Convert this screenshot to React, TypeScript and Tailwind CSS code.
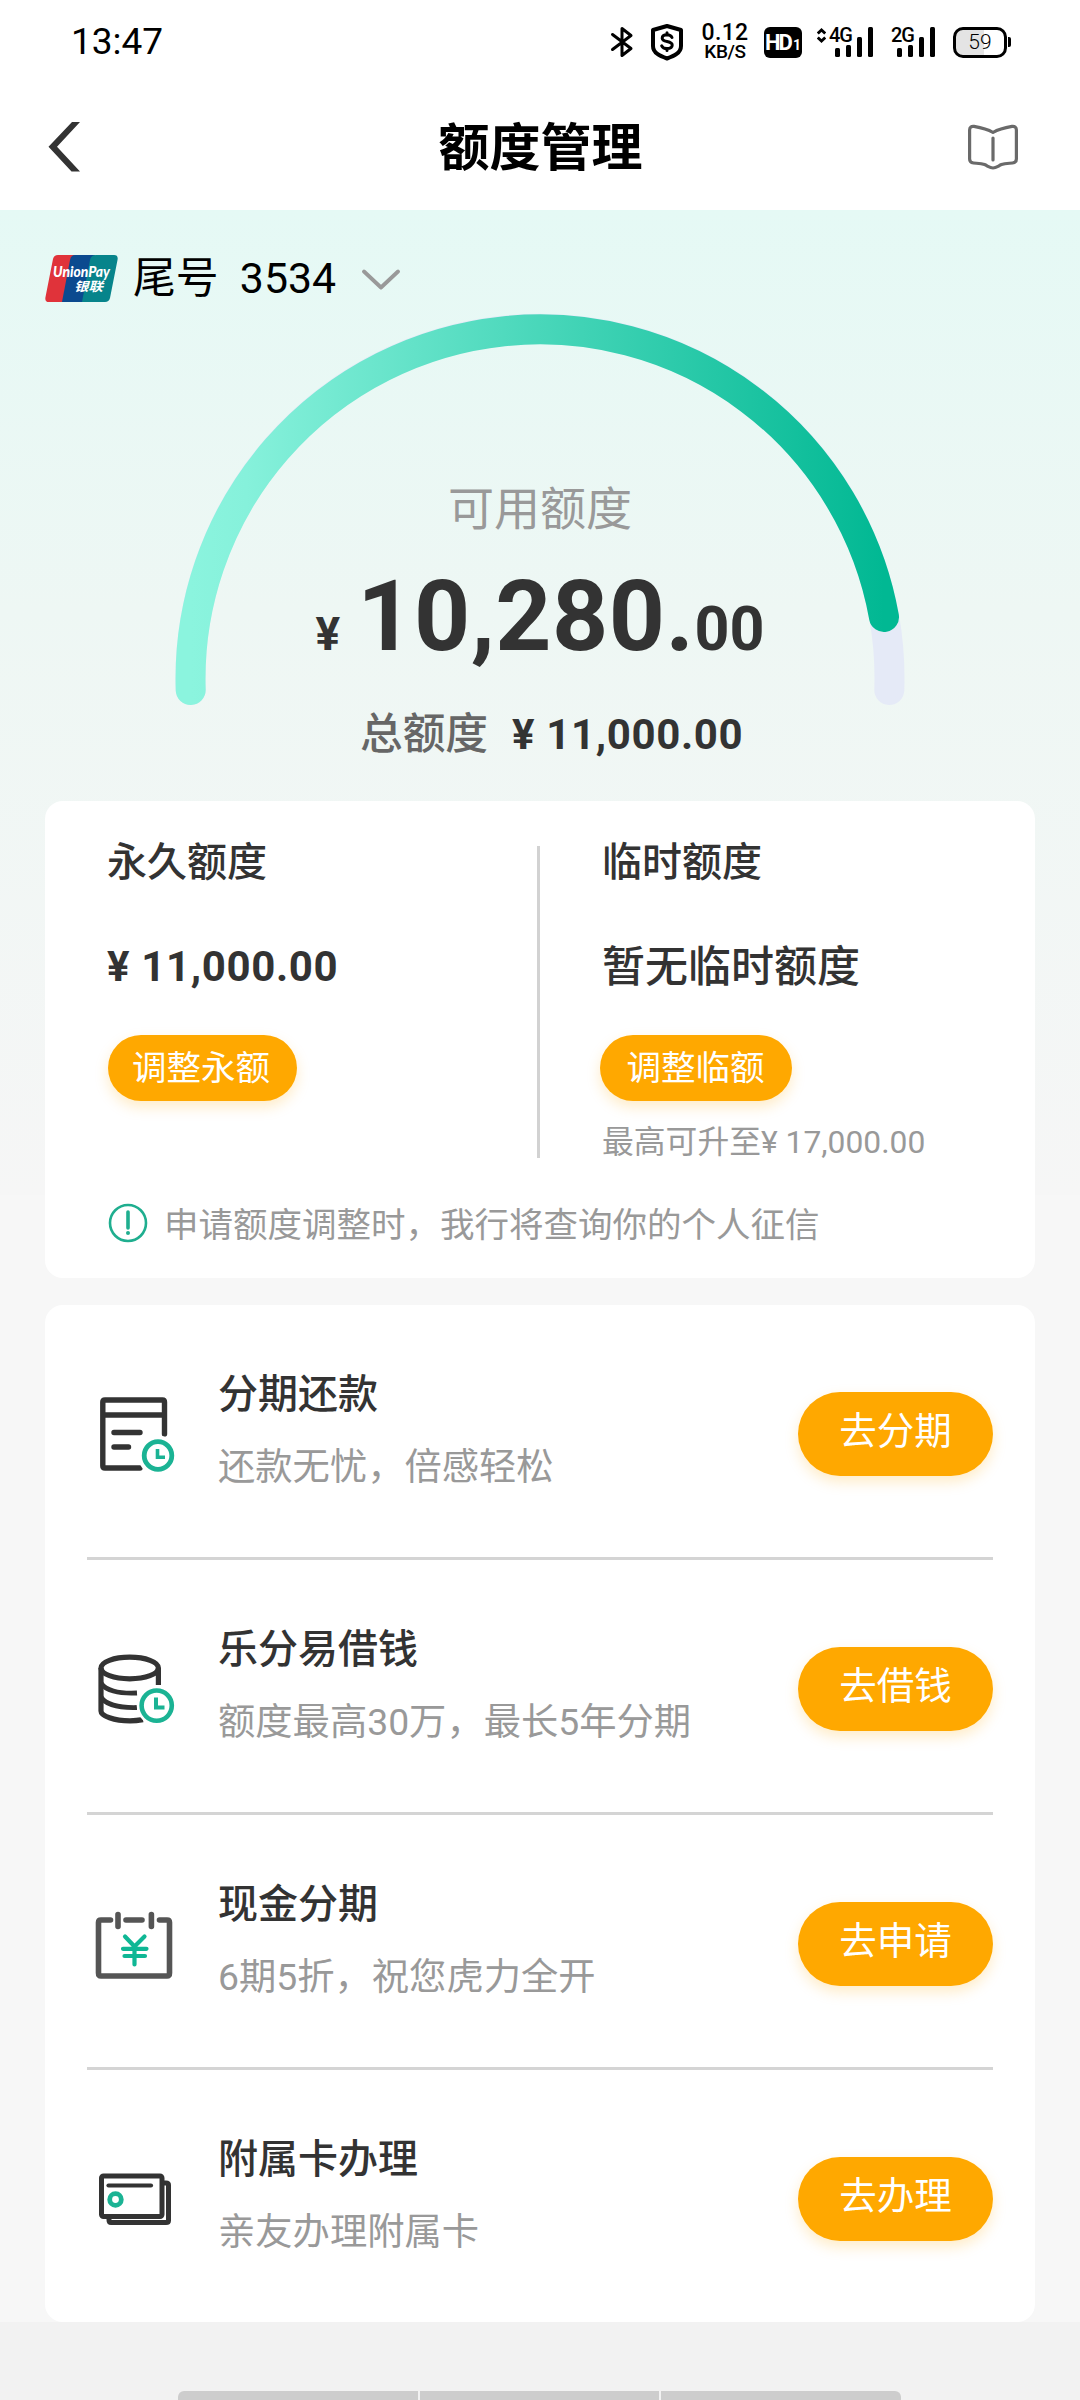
import React from "react";

const CJK = "font-['Roboto','Noto_Sans_CJK_SC',sans-serif]";

function SignalBars() {
  return (
    <svg className="absolute bottom-0 right-0 h-[30px] w-[38px]" viewBox="0 0 38 30" fill="#000">
      <rect x="0" y="21" width="5" height="9" rx="1.5" />
      <rect x="11" y="18" width="5" height="12" rx="1.5" />
      <rect x="22" y="10" width="5" height="20" rx="1.5" />
      <rect x="33" y="0" width="5" height="30" rx="1.5" />
    </svg>
  );
}

function StatusBar() {
  return (
    <div className="flex h-[84px] items-center pl-[71px] pr-[69px]">
      <div className="text-[37px] leading-[42px] text-black">13:47</div>
      <div className="ml-auto flex items-center">
        <svg className="h-[32px] w-[24px]" viewBox="0 0 24 32" fill="none" stroke="#000" strokeWidth="3" strokeLinejoin="round" strokeLinecap="round">
          <path d="M2.5 8.5 L21 22.5 L12 29.5 V2.5 L21 9.5 L2.5 23.5" />
        </svg>
        <svg className="ml-[16px] h-[38px] w-[34px]" viewBox="0 0 34 38" fill="none" stroke="#000" strokeLinejoin="round" strokeLinecap="round">
          <path d="M17 3 L31 7 V23 C31 30 24 33 17 35.5 C10 33 3 30 3 23 V7 Z" strokeWidth="4" />
          <path d="M22 14.5 C21 12.3 19 11.8 17 11.8 C14 11.8 12.2 13 12.2 15.2 C12.2 19.8 22.2 17.2 22.2 22 C22.2 24.4 20 25.6 17 25.6 C14.6 25.6 12.6 24.8 11.7 22.8 M17 9.8 V12 M17 25.6 V27.6" strokeWidth="3" />
        </svg>
        <div className="ml-[18px] flex w-[46px] flex-col items-center font-medium text-black">
          <span className="text-[23px] leading-[20px] tracking-[0.3px]">0.12</span>
          <span className="text-[19px] leading-[18px] tracking-[-0.4px]">KB/S</span>
        </div>
        <div className="ml-[16px] flex h-[31px] w-[38px] items-center justify-center rounded-[6px] bg-black pt-px text-white">
          <span className="text-[22px] font-bold leading-none tracking-[-2px]">HD</span>
          <span className="pl-[2px] pt-[5px] text-[14px] font-bold leading-none">1</span>
        </div>
        <div className="relative ml-[15px] h-[30px] w-[56px]">
          <svg className="absolute left-0 top-[1px] h-[15px] w-[9px]" viewBox="0 0 9 15" fill="none" stroke="#000" strokeWidth="2.8">
            <path d="M0.800 5.5 L4.5 2 L8.200 5.5 M0.800 9.5 L4.5 13 L8.200 9.5" />
          </svg>
          <span className="absolute left-[12px] top-[-2px] text-[20px] font-medium leading-[20px] tracking-[-1px]">4G</span>
          <SignalBars />
        </div>
        <div className="relative ml-[18px] h-[30px] w-[44px]">
          <span className="absolute left-0 top-[-2px] text-[20px] font-medium leading-[20px] tracking-[-1px]">2G</span>
          <SignalBars />
        </div>
        <div className="ml-[18px] flex items-center">
          <div className="flex h-[31px] w-[54px] items-center justify-center rounded-[10px] border-[3px] border-black bg-[linear-gradient(to_right,#e4e4e4_58%,#fff_58%)] text-[21px] font-light leading-none">59</div>
          <div className="ml-px h-[10px] w-[3px] rounded-r-[2px] bg-black" />
        </div>
      </div>
    </div>
  );
}

function TitleBar() {
  return (
    <div className="flex h-[126px] items-center justify-between pb-[1px] pl-[48px] pr-[61px]">
      <svg className="h-[50px] w-[34px]" viewBox="0 0 34 50" fill="#333">
        <path d="M24 0 H32 L9 24.7 L32 49.5 H23.5 L0.5 24.7 Z" />
      </svg>
      <h1 className="pl-[32px] pt-[4px] text-[51px] font-bold leading-[60px] text-black">额度管理</h1>
      <svg className="h-[46px] w-[52px]" viewBox="0 0 52 46" fill="none" stroke="#6a6a6a" strokeWidth="3.2" strokeLinejoin="round" strokeLinecap="round">
        <path d="M26 8.5 C21 5.5 14 3.6 7 2.4 C4.5 2 2.6 3.2 2.6 6 V35 C2.6 37.4 4 38.7 6.5 39 C10 39.4 14 39.3 17.5 40.6 C20.5 41.8 23 44 26 44 C29 44 31.5 41.8 34.5 40.6 C38 39.3 42 39.4 45.5 39 C48 38.7 49.4 37.4 49.4 35 V6 C49.4 3.2 47.5 2 45 2.4 C38 3.6 31 5.5 26 8.5 Z M26 14 V36" />
      </svg>
    </div>
  );
}

function UnionPayLogo() {
  return (
    <svg className="h-[47px] w-[73px]" viewBox="0 0 73 47">
      <path d="M13 0 H30 L20 47 H4 Q-0.5 47 0.5 42 L8 4 Q9 0 13 0 Z" fill="#e0333a" />
      <path d="M30 0 H50 L40 47 H17 L25 5 Q26 0 30 0 Z" fill="#0b4a8f" />
      <path d="M51 0 H69 Q73.5 0 72.5 5 L65 43 Q64 47 60 47 H37 L45 5 Q46 0 51 0 Z" fill="#07848b" />
      <text x="8" y="22" fontSize="15" fontWeight="900" fontStyle="italic" fill="#fff" textLength="57" lengthAdjust="spacingAndGlyphs" fontFamily="Lato, sans-serif">UnionPay</text>
      <text x="29" y="35.5" fontSize="12.5" fontWeight="700" fontStyle="italic" fill="#fff" textLength="29" lengthAdjust="spacingAndGlyphs" fontFamily="Noto Sans CJK SC, sans-serif">银联</text>
    </svg>
  );
}

function Gauge() {
  return (
    <div className="relative mt-[8px] h-[394px] w-[730px] self-center">
      <svg className="absolute inset-0 h-[394px] w-[730px]" viewBox="175 312 730 394" fill="none" strokeWidth="30" strokeLinecap="round">
        <defs>
          <linearGradient id="gauge" gradientUnits="userSpaceOnUse" x1="191" y1="0" x2="884" y2="0">
            <stop offset="0" stopColor="#8bf4de" />
            <stop offset="0.08" stopColor="#86f1db" />
            <stop offset="1" stopColor="#01b893" />
          </linearGradient>
        </defs>
        <path d="M190.7 690 A349.5 349.5 0 1 1 889.3 690" stroke="#e5eaf7" />
        <path d="M190.7 690 A349.5 349.5 0 0 1 884 617" stroke="url(#gauge)" />
      </svg>
      <div className="relative flex flex-col items-center pt-[164px]">
        <div className="text-[46px] leading-[66px] text-[#999]">可用额度</div>
        <div className="mt-[17px] flex items-baseline whitespace-pre font-bold leading-[116px] text-[#333]">
          <span className="text-[46px]">¥</span>
          <span className="ml-[17px] text-[98px] tracking-[0.5px]">10,280.</span>
          <span className="text-[61px]">00</span>
        </div>
      </div>
    </div>
  );
}

function PillButton({ children, className }: { children: React.ReactNode; className: string }) {
  return (
    <button className={"flex shrink-0 justify-center rounded-full bg-[#ffa800] text-white shadow-[0_6px_14px_rgba(255,168,0,0.22)] " + className}>
      {children}
    </button>
  );
}

function LimitCard() {
  return (
    <section className="mx-[45px] h-[477px] rounded-[18px] bg-white pt-[45px]">
      <div className="flex h-[312px]">
        <div className="w-[492px] pl-[62px] text-[#333]">
          <div className="-mt-[13px] text-[40px] font-medium leading-[60px]">永久额度</div>
          <div className="mt-[44px] text-[42px] font-bold leading-[60px] tracking-[0.65px]">¥ 11,000.00</div>
          <PillButton className="ml-px mt-[38px] h-[66px] w-[189px] pr-[3px] pt-[8px] text-[34.5px] leading-[50px]">调整永额</PillButton>
        </div>
        <div className="w-[3px] bg-[#d2d2d2]" />
        <div className="pl-[62px] text-[#333]">
          <div className="-mt-[13px] text-[40px] font-medium leading-[60px]">临时额度</div>
          <div className="mt-[44px] text-[43px] font-medium leading-[60px]">暂无临时额度</div>
          <PillButton className="-ml-[2px] mt-[38px] h-[66px] w-[192px] pr-[1px] pt-[8px] text-[34.5px] leading-[50px]">调整临额</PillButton>
          <div className="mt-[18px] whitespace-nowrap text-[31.8px] leading-[46px] text-[#999]">最高可升至¥ 17,000.00</div>
        </div>
      </div>
      <div className="mt-[40px] flex h-[50px] items-center pl-[63px]">
        <svg className="h-[40px] w-[40px]" viewBox="0 0 40 40" fill="none" stroke="#1fae8f" strokeWidth="2.6">
          <circle cx="20" cy="20" r="18" />
          <path d="M20 9 V25" strokeWidth="3.6" strokeLinecap="round" />
          <circle cx="20" cy="30" r="2" fill="#1fae8f" stroke="none" />
        </svg>
        <span className="ml-[16px] pt-[3px] text-[34.5px] leading-[50px] text-[#999]">申请额度调整时，我行将查询你的个人征信</span>
      </div>
    </section>
  );
}

/* Row icons share a 90x90 box so that every row lines up. */
function BillIcon() {
  return (
    <svg className="h-[90px] w-[90px]" viewBox="90 1389 90 90" fill="none" stroke="#333" strokeWidth="5.4" strokeLinecap="round" strokeLinejoin="round">
      <path d="M164.5 1434 V1402 Q164.5 1400 162.5 1400 H105 Q102.8 1400 102.8 1402 V1466 Q102.8 1468 105 1468 H140 M103 1415 H164" />
      <path d="M114 1432.5 H140 M114 1447 H128.5" />
      <circle cx="158" cy="1455.5" r="20" fill="#fff" stroke="none" />
      <circle cx="158" cy="1455.5" r="13.8" stroke="#1bb394" strokeWidth="4.8" />
      <path d="M157.5 1449 V1457.2 H165" stroke="#1bb394" strokeWidth="3.6" strokeLinecap="butt" strokeLinejoin="miter" />
    </svg>
  );
}

function CoinsIcon() {
  return (
    <svg className="h-[90px] w-[90px]" viewBox="90 1644 90 90" fill="none" stroke="#333" strokeWidth="5.2" strokeLinecap="butt">
      <ellipse cx="129.7" cy="1668" rx="28.7" ry="10.8" />
      <path d="M101 1668 V1711 C101 1716 114 1720.8 130 1720.8 C135 1720.8 139 1720.3 143 1719.6 M158.4 1668 V1685" />
      <path d="M101 1683 C105 1690 118 1694 137 1693 M101 1697 C105 1704 118 1708 137 1707.5" strokeWidth="4.8" />
      <circle cx="156.7" cy="1705.6" r="20" fill="#fff" stroke="none" />
      <circle cx="156.7" cy="1705.6" r="15.1" stroke="#1bb394" strokeWidth="4.6" />
      <path d="M156 1697.500 V1707.500 H164.500" stroke="#1bb394" strokeWidth="4" />
    </svg>
  );
}

function CalendarIcon() {
  return (
    <svg className="h-[90px] w-[90px]" viewBox="90 1899 90 90" fill="none" stroke="#555" strokeWidth="5.6" strokeLinecap="round" strokeLinejoin="round">
      <path d="M110.5 1920 H101 Q98.5 1920 98.5 1922.5 V1973 Q98.5 1976 101 1976 H167 Q169.5 1976 169.5 1973 V1922.5 Q169.5 1920 167 1920 H159.5 M126 1920 H142 M118 1914.5 V1926.5 M151.4 1914.5 V1926.5" />
      <path d="M125 1936.5 L134.5 1946.5 L144.500 1936.5 M134.5 1946 V1964.5 M123 1948.8 H146.5 M124.5 1956 H145" stroke="#0fb795" strokeWidth="4.2" />
    </svg>
  );
}

function CardsIcon() {
  return (
    <svg className="h-[90px] w-[90px]" viewBox="90 2154 90 90" fill="none" stroke="#333" strokeWidth="5" strokeLinecap="round" strokeLinejoin="round">
      <path d="M109 2217 V2220 Q109 2222.500 111 2222.500 H166 Q168.500 2222.500 168.500 2220.500 V2185 Q168.500 2183 166 2183 H163" />
      <rect x="101.5" y="2176" width="60.5" height="40.5" rx="2" fill="#fff" />
      <path d="M108.5 2185.5 H151" strokeWidth="4.2" />
      <circle cx="115.5" cy="2199.5" r="5.8" stroke="#1bb394" strokeWidth="4.8" />
    </svg>
  );
}

const services = [
  { icon: <BillIcon />, title: "分期还款", desc: "还款无忧，倍感轻松", action: "去分期" },
  { icon: <CoinsIcon />, title: "乐分易借钱", desc: "额度最高30万，最长5年分期", action: "去借钱" },
  { icon: <CalendarIcon />, title: "现金分期", desc: "6期5折，祝您虎力全开", action: "去申请" },
  { icon: <CardsIcon />, title: "附属卡办理", desc: "亲友办理附属卡", action: "去办理" },
];

function ServiceCard() {
  return (
    <section className="mx-[45px] mt-[27px] divide-y-[3px] divide-[#d4d4d4] rounded-[18px] bg-white px-[42px]">
      {services.map((s) => (
        <div key={s.title} className="box-content flex h-[252px] items-start">
          <div className="ml-[3px] mt-[84px]">{s.icon}</div>
          <div className="ml-[38px] pt-[60px]">
            <div className="text-[40px] font-medium leading-[60px] text-[#333]">{s.title}</div>
            <div className="mt-[14px] text-[37.3px] leading-[56px] text-[#999]">{s.desc}</div>
          </div>
          <PillButton className="ml-auto mt-[87px] h-[84px] w-[195px] pt-[11px] text-[37.5px] leading-[56px]">{s.action}</PillButton>
        </div>
      ))}
    </section>
  );
}

export default function App() {
  return (
    <div className={"flex h-[2400px] w-[1080px] flex-col overflow-hidden bg-[#f2f2f2] " + CJK}>
      <header className="h-[210px] shrink-0 bg-white">
        <StatusBar />
        <TitleBar />
      </header>
      <main className="flex h-[2112px] shrink-0 flex-col bg-[#f7f7f7] bg-[linear-gradient(to_bottom,#e5f9f5_0px,#eef7f4_400px,#f6f6f6_985px,#f7f7f7_985px)]">
        <div className="flex h-[94px] items-start pl-[45px] pt-[45px]">
          <UnionPayLogo />
          <span className="ml-[15px] -mt-[8px] whitespace-pre text-[42.8px] leading-[62px] text-black">尾号  3534</span>
          <svg className="ml-[25px] mt-[14px] h-[22px] w-[40px]" viewBox="0 0 40 22" fill="none" stroke="#999" strokeWidth="3.8" strokeLinecap="round" strokeLinejoin="round">
            <path d="M3 2.500 L20 18.500 L37 2.500" />
          </svg>
        </div>
        <Gauge />
        <div className="flex h-[95px] items-baseline pl-[360px] leading-[56px]">
          <span className="text-[42.7px] font-medium text-[#666]">总额度</span>
          <span className="ml-[24px] text-[42px] font-bold tracking-[0.65px] text-[#333]">¥ 11,000.00</span>
        </div>
        <LimitCard />
        <ServiceCard />
      </main>
      <div className="ml-[178px] mt-[69px] flex h-[9px] w-[723px] shrink-0 gap-[2px] overflow-hidden rounded-t-[6px]">
        <div className="flex-1 bg-[#cdcdcd]" />
        <div className="flex-1 bg-[#cdcdcd]" />
        <div className="flex-1 bg-[#cdcdcd]" />
      </div>
    </div>
  );
}
